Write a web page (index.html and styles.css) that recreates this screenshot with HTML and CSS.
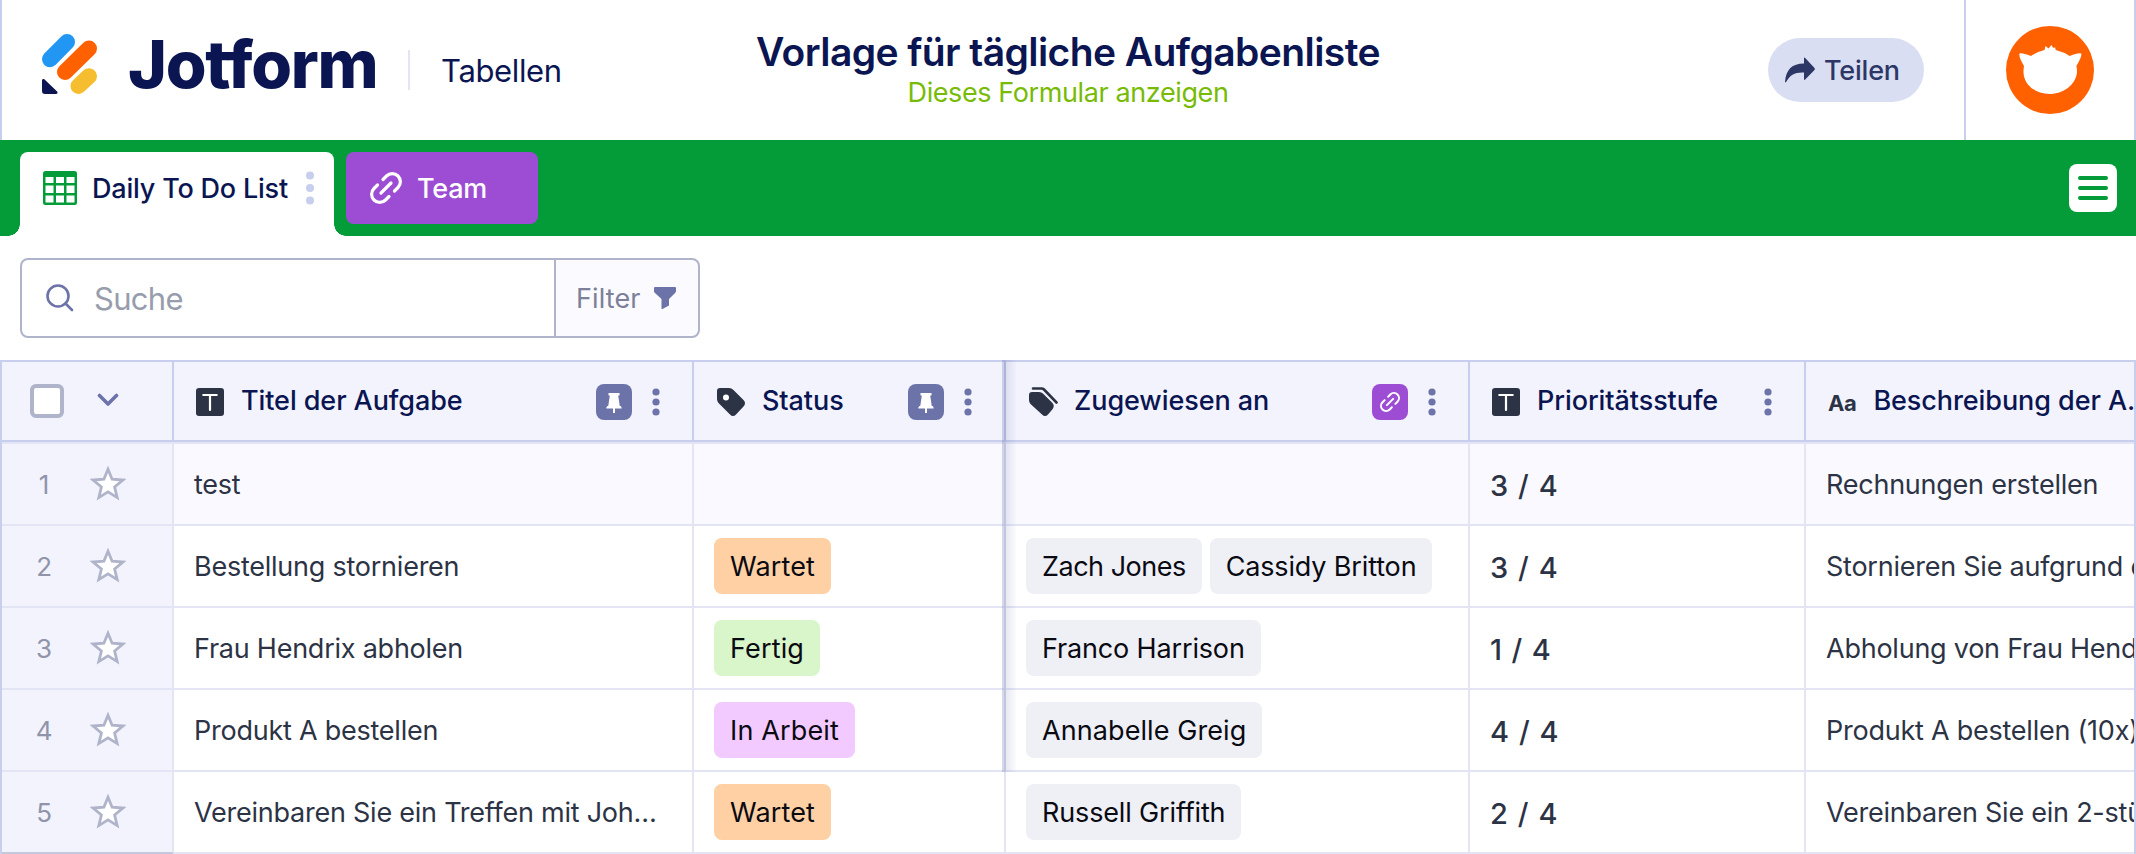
FILE: index.html
```
<!DOCTYPE html>
<html lang="de"><head><meta charset="utf-8"><title>Vorlage für tägliche Aufgabenliste</title><link rel="stylesheet" href="styles.css"></head>
<body>
<svg class="defs" width="0" height="0">
<symbol id="dots" viewBox="0 0 8 28"><circle cx="4" cy="4" r="3.6"/><circle cx="4" cy="14" r="3.6"/><circle cx="4" cy="24" r="3.6"/></symbol>
<symbol id="star" viewBox="0 0 36 36"><path d="M18 3.200l4.100 10 10.800.8-8.300 7 2.600 10.600L18 25.900l-9.200 5.700L11.400 21l-8.300-7 10.800-.8z" fill="#fff" stroke="#b0b4cb" stroke-width="2.800"/></symbol>
<symbol id="textfield" viewBox="0 0 28 28"><rect width="28" height="28" rx="3" fill="#2c3345"/><path d="M7.300 7h13.400M14 7v15" stroke="#fff" stroke-width="2.200" stroke-linecap="round"/></symbol>
<symbol id="pin" viewBox="0 0 36 36"><path d="M12.500 9h11v2.600h-1.300l1.500 10.200c1.200.3 2 1.300 2 2.600H19V29h-2v-4.600h-6.700c0-1.300.8-2.300 2-2.600l1.500-10.200h-1.300z" fill="#fff"/></symbol>
<symbol id="link" viewBox="0 0 32 32"><g fill="none" stroke="#fff" stroke-width="3.200" stroke-linecap="round"><path d="M11 21L21 11"/><path d="M13 7.500l3.500-3.500a7.800 7.800 0 0 1 11.500 11.500L24.500 19"/><path d="M7.500 13L4 16.500a7.800 7.800 0 0 0 11.500 11.500L19 24.500"/></g></symbol>
</svg>
<header class="header">
  <div class="brand">
    <svg class="logo-mark" width="56" height="60" viewBox="0 0 56 60"><g stroke-linecap="round" stroke-width="16" fill="none"><path d="M8 25.200L25 8" stroke="#2196f3"/><path d="M23 38L47 14.500" stroke="#ff6100"/><path d="M36.500 52L47 42.200" stroke="#f6be2f"/></g><path d="M0 46.500c0-1.500 1.600-2.100 2.600-1.100l12.500 12c1 1 .3 2.600-1.100 2.600H3a3 3 0 0 1-3-3z" fill="#0a1551"/></svg>
    <span class="wordmark">Jotform</span><i class="brand-rule"></i><span class="product">Tabellen</span>
  </div>
  <div class="title"><h1>Vorlage für tägliche Aufgabenliste</h1><a>Dieses Formular anzeigen</a></div>
  <div class="actions">
    <button class="share"><svg width="32" height="26" viewBox="0 0 32 26"><path d="M1 25C2 12.500 8 6.500 20 6.500V1.500q0-1.500 1.200-.5l9.300 10q.8 1-.0 2l-9.300 9.500q-1.200 1-1.200-.5v-6.500C11 15 6 18 2.200 24.800q-.9 1.200-1.200.2z" fill="#2c3765"/></svg><span>Teilen</span></button>
    <div class="account"><svg width="88" height="88" viewBox="0 0 88 88"><circle cx="44" cy="44" r="44" fill="#ff6100"/><path d="M13.500 27.500q2-1.200 11.500 2.500 6.500-4.500 13.500-6l1-4 3 2.500 3-3.500 1.500 2.800 2.200-.3.500 2.500q8 2 14 6 9-3.700 11.500-2.500 1 2.500-4.800 12.500.8 3 .6 6C70 59 57 68 43.500 68S17 59 17.500 45q0-2 .5-5-5.500-9-4.500-12.500z" fill="#fff"/></svg></div>
  </div>
</header>
<nav class="tabs">
  <div class="tab tab-active"><svg width="34" height="34" viewBox="0 0 34 34"><rect width="34" height="34" rx="2.500" fill="#049c38"/><g fill="#fff"><path d="M2.500 6h8v6h-8zm10.500 0h8v6h-8zm10.500 0h8v6h-8zM2.500 14.500h8v7.500h-8zm10.500 0h8v7.500h-8zm10.500 0h8v7.500h-8zM2.500 24.500h8v7h-8zm10.500 0h8v7h-8zm10.500 0h8v7h-8z"/></g></svg><span class="tab-name">Daily To Do List</span><svg class="tab-dots" width="8" height="34" viewBox="0 0 8 34"><circle cx="4" cy="4.500" r="4"/><circle cx="4" cy="17" r="4"/><circle cx="4" cy="29.500" r="4"/></svg></div>
  <div class="tab tab-team"><svg width="32" height="32"><use href="#link"/></svg><span class="tab-name">Team</span></div>
  <button class="menu"><i></i><i></i><i></i></button>
</nav>
<div class="toolbar">
  <div class="search"><svg width="28" height="28" viewBox="0 0 28 28" fill="none" stroke="#6c73a8" stroke-width="2.600" stroke-linecap="round"><circle cx="12" cy="12" r="10.500"/><path d="M19.500 19.500l6.500 6.500"/></svg><span>Suche</span></div>
  <div class="filter"><span>Filter</span><svg width="22" height="22" viewBox="0 0 22 22"><path d="M1 0h20q1 0 1 1v3q0 1-.7 1.700L15 12v6.500L8.500 22q-1 .4-1-.7V12L.7 5.700Q0 5 0 4V1q0-1 1-1z" fill="#6c73a8"/></svg></div>
</div>
<main class="grid">
  <div class="row head">
    <div class="cell select"><i class="checkbox"></i><svg width="22" height="14" viewBox="0 0 22 14"><path d="M2.500 2.500l8.500 8.500 8.500-8.500" fill="none" stroke="#6c73a8" stroke-width="3.600" stroke-linecap="round" stroke-linejoin="round"/></svg></div>
    <div class="cell"><svg class="type" width="28" height="28"><use href="#textfield"/></svg><span class="label">Titel der Aufgabe</span><b class="badge"><svg width="36" height="36"><use href="#pin"/></svg></b><svg class="more" width="8" height="28"><use href="#dots"/></svg></div>
    <div class="cell"><svg class="type" width="30" height="30" viewBox="0 0 30 30"><path d="M4 1h9q2.500 0 4.200 1.700l10.300 10.300q3 3 0 6.500l-7.500 8q-3 3-6 0L2.500 16Q1 14.500 1 12V4q0-3 3-3z" fill="#2c3345"/><circle cx="10" cy="10.500" r="3" fill="#fff"/></svg><span class="label label-tag">Status</span><b class="badge"><svg width="36" height="36"><use href="#pin"/></svg></b><svg class="more" width="8" height="28"><use href="#dots"/></svg></div>
    <div class="cell"><svg class="type" width="30" height="30" viewBox="0 0 30 30"><path d="M4 5h7q2.500 0 4.200 1.700l9.300 9.300q2.500 3 0 6.200l-4.500 5.300q-3 3-6 0L2.500 17Q1 15.500 1 13V8q0-3 3-3z" fill="#2c3345"/><path d="M5 1.500h8.500q1.500 0 2.500 1L28.500 15.500" fill="none" stroke="#2c3345" stroke-width="2.600" stroke-linecap="round"/></svg><span class="label label-tag">Zugewiesen an</span><b class="badge badge-link"><svg width="20" height="20"><use href="#link"/></svg></b><svg class="more" width="8" height="28"><use href="#dots"/></svg></div>
    <div class="cell"><svg class="type" width="28" height="28"><use href="#textfield"/></svg><span class="label">Prioritätsstufe</span><svg class="more" width="8" height="28"><use href="#dots"/></svg></div>
    <div class="cell"><span class="aa">Aa</span><span class="label">Beschreibung der A...</span></div>
  </div>
  <div class="row first"><div class="cell select"><span class="num">1</span><svg width="36" height="36"><use href="#star"/></svg></div><div class="cell"><span>test</span></div><div class="cell"></div><div class="cell"></div><div class="cell prio">3 / 4</div><div class="cell">Rechnungen erstellen</div></div>
  <div class="row"><div class="cell select"><span class="num">2</span><svg width="36" height="36"><use href="#star"/></svg></div><div class="cell"><span>Bestellung stornieren</span></div><div class="cell"><span class="chip status wait">Wartet</span></div><div class="cell"><span class="chip chip-tight">Zach Jones</span><span class="chip">Cassidy Britton</span></div><div class="cell prio">3 / 4</div><div class="cell">Stornieren Sie aufgrund der</div></div>
  <div class="row"><div class="cell select"><span class="num">3</span><svg width="36" height="36"><use href="#star"/></svg></div><div class="cell"><span>Frau Hendrix abholen</span></div><div class="cell"><span class="chip status done">Fertig</span></div><div class="cell"><span class="chip">Franco Harrison</span></div><div class="cell prio prio-one">1 / 4</div><div class="cell">Abholung von Frau Hendrix</div></div>
  <div class="row"><div class="cell select"><span class="num">4</span><svg width="36" height="36"><use href="#star"/></svg></div><div class="cell"><span>Produkt A bestellen</span></div><div class="cell"><span class="chip status progress">In Arbeit</span></div><div class="cell"><span class="chip chip-wide">Annabelle Greig</span></div><div class="cell prio">4 / 4</div><div class="cell">Produkt A bestellen (10x)</div></div>
  <div class="row"><div class="cell select select-last"><span class="num">5</span><svg width="36" height="36"><use href="#star"/></svg></div><div class="cell"><span>Vereinbaren Sie ein Treffen mit Joh…</span></div><div class="cell"><span class="chip status wait">Wartet</span></div><div class="cell"><span class="chip">Russell Griffith</span></div><div class="cell prio">2 / 4</div><div class="cell">Vereinbaren Sie ein 2-stündiges</div></div>
  <i class="pin-shadow"></i>
</main>
</body></html>
```
FILE: styles.css
```
* { box-sizing: border-box; }
body { margin: 0; width: 2136px; height: 854px; overflow: hidden; background: #fff; color: #2c3345; font-family: Inter, "Liberation Sans", sans-serif; font-size: 27px; letter-spacing: -0.4px; }
button { border: 0; padding: 0; font: inherit; letter-spacing: inherit; }
svg { display: block; flex: none; }
.defs { position: absolute; }

.header { display: grid; grid-template-columns: 1fr 640px 1fr; height: 140px; border: solid #c8ceed; border-width: 0 2px; color: #0a1551; }
.brand { display: flex; align-items: center; padding-left: 40px; white-space: nowrap; }
.logo-mark { margin-top: -12px; }
.wordmark { width: 251px; margin: -13px 0 0 30px; font-size: 66px; font-weight: 800; letter-spacing: -1.3px; font-variant-ligatures: none; }
.brand-rule { width: 2px; height: 40px; margin-left: 29px; background: #e3e5f5; }
.product { margin: 0 0 0 31px; font-size: 31px; letter-spacing: -0.35px; }
.title { display: flex; flex-direction: column; align-items: center; padding-top: 28px; white-space: nowrap; }
.title h1 { margin: 0; font-size: 39px; line-height: 48px; font-weight: 600; letter-spacing: -0.58px; }
.title a { color: #78bb07; line-height: 34px; }
.actions { display: flex; align-items: center; justify-content: flex-end; }
.share { display: flex; align-items: center; gap: 8px; width: 156px; height: 64px; padding-left: 16px; margin-right: 40px; border-radius: 32px; background: #dadef3; color: #2c3765; font-weight: 500; letter-spacing: -0.2px; }
.account { display: flex; align-items: center; justify-content: center; width: 170px; height: 140px; border-left: 2px solid #c8ceed; }

.tabs { display: flex; align-items: flex-start; height: 96px; padding: 12px 19px 0 20px; background: #049c38; font-weight: 500; }
.tab { position: relative; display: flex; align-items: center; }
.tab-active { width: 314px; height: 84px; padding: 0 20px 12px 23px; border-radius: 8px 8px 0 0; background: #fff; color: #0a1551; }
.tab-active::before, .tab-active::after { content: ""; position: absolute; bottom: 0; width: 12px; height: 12px; }
.tab-active::before { left: -12px; background: radial-gradient(circle at 0 0, transparent 11.5px, #fff 12px); }
.tab-active::after { right: -12px; background: radial-gradient(circle at 100% 0, transparent 11.5px, #fff 12px); }
.tab-name { margin-left: 15px; letter-spacing: -0.2px; white-space: nowrap; }
.tab-dots { margin-left: auto; fill: #c8ceed; }
.tab-team { width: 192px; height: 72px; margin-left: 12px; padding-left: 24px; border-radius: 8px; background: #9c4dd3; color: #fff; }
.menu { display: flex; flex-direction: column; align-items: center; justify-content: center; gap: 6px; width: 48px; height: 48px; margin: 12px 0 0 auto; border-radius: 8px; background: #fff; }
.menu i { width: 30px; height: 4px; border-radius: 2px; background: #049c38; }

.toolbar { display: flex; height: 124px; padding: 22px 20px; }
.search, .filter { display: flex; align-items: center; height: 80px; border: 2px solid #b0b4cb; }
.search { width: 536px; padding-left: 24px; gap: 20px; border-radius: 8px 0 0 8px; color: #979dac; font-size: 31px; letter-spacing: -0.7px; }
.filter { width: 146px; margin-left: -2px; padding-left: 20px; gap: 13px; border-radius: 0 8px 8px 0; background: #fafaff; color: #7c8099; letter-spacing: 0.1px; }

.grid { position: relative; border-left: 2px solid #c8ceed; border-right: 2px solid #c8ceed; }
.row { display: grid; grid-template-columns: 172px 520px 312px 464px 336px 328px; height: 82px; letter-spacing: -0.24px; }
.cell { display: flex; align-items: center; min-width: 0; overflow: hidden; padding-left: 20px; border-right: 2px solid #e3e5f5; border-bottom: 2px solid #e3e5f5; white-space: nowrap; gap: 8px; }
.cell:last-child { border-right: 0; }
.head .cell { gap: 0; padding: 0 20px 0 22px; border-top: 2px solid #c8ceed; border-bottom-color: #c8ceed; border-right-color: #c8ceed; background: #f3f3fe; color: #0a1551; font-weight: 500; letter-spacing: -0.08px; }
.head .cell:last-child { padding-right: 0; }
.first { height: 84px; }
.first .cell { border-top: 2px solid #e3e5f5; background: #f9f9ff; }
.row .select { gap: 0; padding: 0 0 0 28px; background: #f3f3fe; }
.row .select-last { border-bottom-color: #c4c8dc; }
.head .select svg { margin: -2px 0 0 33px; }
.checkbox { width: 34px; height: 34px; border: 4px solid #b0b4cb; border-radius: 6px; background: #fff; }
.label { margin: -2px 0 0 17px; }
.label-tag { margin-left: 16px; }
.badge { margin: 2px 20px 0 auto; display: flex; align-items: center; justify-content: center; width: 36px; height: 36px; border-radius: 8px; background: #6c73a8; }
.badge-link { background: #9c4dd3; }
.more { fill: #6c73a8; margin-right: 12px; margin-top: 2px; }
.label + .more { margin-left: auto; }
.type { margin-top: 2px; }
.aa { width: 29px; margin-top: 3px; color: #2c3345; font-size: 22px; font-weight: 700; letter-spacing: -0.4px; }
.num { width: 30px; margin-left: -1px; color: #9094a8; font-size: 26px; text-align: center; }
.select .num + svg { margin-left: 31px; }
.row .prio { padding-top: 2px; font-size: 29px; font-weight: 500; letter-spacing: 1.1px; }
.row .prio-one { letter-spacing: 0.9px; }
.chip { display: flex; align-items: center; height: 56px; padding: 0 16px; border-radius: 8px; background: #eff0f6; color: #0a0a12; letter-spacing: -0.15px; }
.chip-tight { letter-spacing: -0.5px; }
.chip-wide { letter-spacing: 0.08px; }
.status { letter-spacing: 0.15px; }
.wait { background: #ffd0a3; }
.done { background: #d9f5ca; }
.progress { background: #f3caff; }
.pin-shadow { position: absolute; top: 0; left: 1000px; width: 14px; height: 412px; background: linear-gradient(90deg, rgba(90, 100, 160, .25) 0 4px, rgba(90, 100, 160, .14) 4px, rgba(90, 100, 160, .02)); }
```
